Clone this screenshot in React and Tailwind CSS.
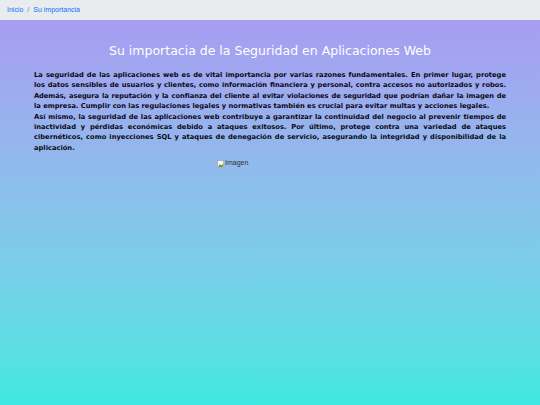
export default function App() {
  return (
    <div className="min-h-[405px] flex flex-col bg-gradient-to-b from-[#aa98f2] to-[#3de8e1]">
      <nav className="h-[20px] bg-[#e9ecef] flex items-center px-[7px] text-[7px] font-['Liberation_Sans',Arial,sans-serif]">
        <a className="text-[#0d6efd]">Inicio</a>
        <span className="mx-[4px] text-[#6c757d]">/</span>
        <span className="text-[#0d6efd]">Su importancia</span>
      </nav>
      <main className="w-[472px] mx-auto font-['DejaVu_Sans',Verdana,sans-serif]">
        <h1 className="text-white text-[12.5px] text-center mt-[22px] mb-[10px] leading-[18px]">
          Su importacia de la Seguridad en Aplicaciones Web
        </h1>
        <p className="text-[6.72px] font-bold leading-[10.4px] text-justify text-[#0a0a14]">
          La seguridad de las aplicaciones web es de vital importancia por varias razones fundamentales. En primer lugar, protege los datos sensibles de usuarios y clientes, como información financiera y personal, contra accesos no autorizados y robos.{' '}
          <span className="tracking-[-0.08px]">Además, asegura la reputación y la confianza del cliente al evitar violaciones de seguridad que podrían dañar la imagen de</span>{' '}
          la{'\u00a0'}empresa. Cumplir con las regulaciones legales y normativas también es crucial para evitar multas y acciones legales.
          <br />
          Así mismo, la seguridad de las aplicaciones web contribuye a garantizar la continuidad del negocio al prevenir tiempos de inactividad y pérdidas económicas debido a ataques exitosos. Por último, protege contra una variedad de ataques cibernéticos, como inyecciones SQL y ataques de denegación de servicio, asegurando la integridad y disponibilidad de la aplicación.
        </p>
        <div className="mt-[5px] pl-[183px] flex items-center text-[7px] text-[#333] font-['Liberation_Sans',Arial,sans-serif]">
          <svg width="7" height="8" viewBox="0 0 7 8" className="mr-[1px]">
            <rect x="0.5" y="0.5" width="6" height="7" fill="#f4f4f4" stroke="#999" strokeWidth="0.6" />
            <path d="M1 7 L3 4 L4.5 5.5 L6 4 L6 7 Z" fill="#5aa03c" />
          </svg>
          <span>Imagen</span>
        </div>
      </main>
    </div>
  )
}
